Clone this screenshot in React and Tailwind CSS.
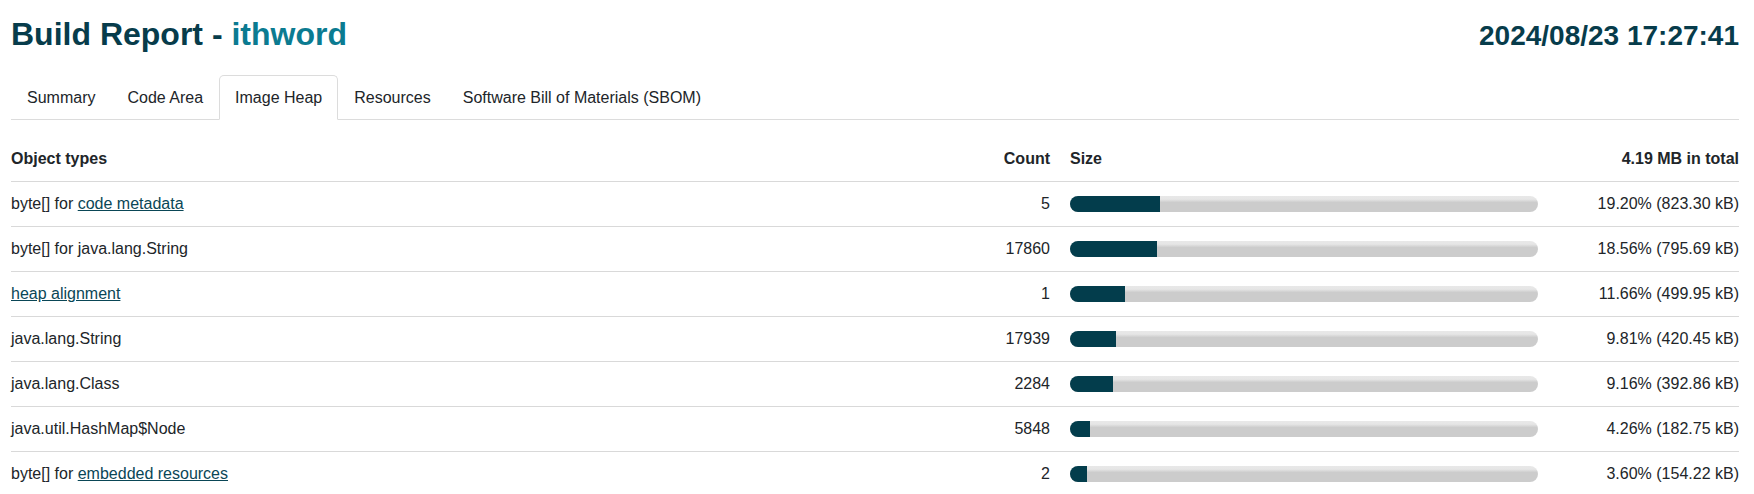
import React from "react";

const rows = [
  { pre: "byte[] for ", link: "code metadata", count: "5", pct: 19.2, label: "19.20% (823.30 kB)" },
  { pre: "byte[] for java.lang.String", count: "17860", pct: 18.56, label: "18.56% (795.69 kB)" },
  { pre: "", link: "heap alignment", count: "1", pct: 11.66, label: "11.66% (499.95 kB)" },
  { pre: "java.lang.String", count: "17939", pct: 9.81, label: "9.81% (420.45 kB)" },
  { pre: "java.lang.Class", count: "2284", pct: 9.16, label: "9.16% (392.86 kB)" },
  { pre: "java.util.HashMap$Node", count: "5848", pct: 4.26, label: "4.26% (182.75 kB)" },
  { pre: "byte[] for ", link: "embedded resources", count: "2", pct: 3.6, label: "3.60% (154.22 kB)" },
];

const tabs = ["Summary", "Code Area", "Image Heap", "Resources", "Software Bill of Materials (SBOM)"];

function Bar({ pct }) {
  return (
    <div className="h-4 w-[468px] overflow-hidden rounded-full bg-[linear-gradient(to_bottom,#e8e8e8_0%,#e6e6e6_20%,#cccccc_40%,#cccccc_100%)]">
      <div className="h-full bg-[#033d4c]" style={{ width: `${pct}%` }} />
    </div>
  );
}

export default function App() {
  return (
    <div className="min-h-screen bg-white pl-[11px] pr-[15px] pt-[14px] text-[#212529] [font-family:'Liberation_Sans',Arial,sans-serif]">
      <div className="flex h-10 items-baseline justify-between">
        <h1 className="text-[32px] font-bold leading-10 text-[#073c4b]">
          Build Report - <span className="text-[#0b7b91]">ithword</span>
        </h1>
        <div className="text-[28px] font-bold leading-10 text-[#073c4b]">2024/08/23 17:27:41</div>
      </div>

      <ul className="mt-[21px] flex border-b border-[#dcdcdc] text-base">
        {tabs.map((t) => (
          <li
            key={t}
            className={
              t === "Image Heap"
                ? "-mb-px rounded-t-[5px] border border-[#dcdcdc] border-b-white bg-white px-[15px] pt-[10px] pb-[9px] leading-6 text-[#212529]"
                : "-mb-px rounded-t-[5px] border border-transparent px-[15px] pt-[10px] pb-[9px] leading-6 text-[#212529]"
            }
          >
            {t}
          </li>
        ))}
      </ul>

      <div className="mt-[17px] grid grid-cols-[1fr_160px_488px_191px] text-base leading-6">
        <div className="border-b border-[#d9d9d9] py-2.5 font-bold">Object types</div>
        <div className="border-b border-[#d9d9d9] py-2.5 pr-2.5 text-right font-bold">Count</div>
        <div className="border-b border-[#d9d9d9] py-2.5 pl-2.5 font-bold">Size</div>
        <div className="border-b border-[#d9d9d9] py-2.5 text-right font-bold">4.19 MB in total</div>

        {rows.map((r, i) => (
          <React.Fragment key={i}>
            <div className="border-b border-[#d9d9d9] py-2.5">
              {r.pre}
              {r.link && <a className="text-[#0a4656] underline">{r.link}</a>}
            </div>
            <div className="border-b border-[#d9d9d9] py-2.5 pr-2.5 text-right">{r.count}</div>
            <div className="flex items-center border-b border-[#d9d9d9] py-2.5 pl-2.5">
              <Bar pct={r.pct} />
            </div>
            <div className="border-b border-[#d9d9d9] py-2.5 text-right">{r.label}</div>
          </React.Fragment>
        ))}
      </div>
    </div>
  );
}
